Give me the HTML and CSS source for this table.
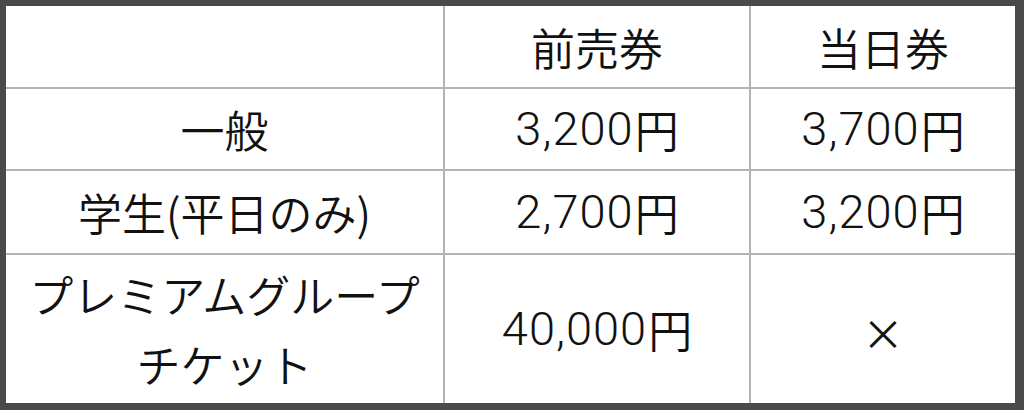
FILE: index.html
```html
<!DOCTYPE html>
<html lang="ja">
<head>
<meta charset="utf-8">
<link rel="stylesheet" href="styles.css">
</head>
<body>
<div class="frame">
  <div class="grid">
    <div class="cell"></div>
    <div class="cell">前売券</div>
    <div class="cell">当日券</div>
    <div class="cell">一般</div>
    <div class="cell"><span class="n">3,200</span>円</div>
    <div class="cell"><span class="n">3,700</span>円</div>
    <div class="cell">学生(平日のみ)</div>
    <div class="cell"><span class="n">2,700</span>円</div>
    <div class="cell"><span class="n">3,200</span>円</div>
    <div class="cell multi">プレミアムグループ<br>チケット</div>
    <div class="cell"><span class="n">40,000</span>円</div>
    <div class="cell"><span class="x">×</span></div>
  </div>
</div>
</body>
</html>
```

FILE: styles.css
```css
html, body {
  margin: 0;
  padding: 0;
  background: #4d4d4d;
}
.frame {
  width: 1024px;
  height: 410px;
  box-sizing: border-box;
  border-style: solid;
  border-color: #4a4a4a;
  border-width: 6px 9px 7px 6px;
  background: #b4b4b4;
}
.grid {
  display: grid;
  grid-template-columns: 437px 304px 264px;
  grid-template-rows: 81px 80px 82px 148px;
  gap: 2px;
  height: 100%;
  background: #b4b4b4;
}
.cell {
  background: #fff;
  display: flex;
  align-items: center;
  justify-content: center;
  text-align: center;
  font-family: "Noto Sans CJK JP", "Noto Sans", sans-serif;
  font-weight: 350;
  font-size: 44px;
  line-height: 70px;
  color: #111;
}
.n {
  font-family: "Roboto", "Liberation Sans", sans-serif;
  font-weight: 300;
  font-size: 47px;
  letter-spacing: 1px;
  margin-right: 1px;
}
.x {
  font-family: "Noto Sans CJK JP", sans-serif;
  font-size: 42px;
  font-weight: 400;
  padding-top: 6px;
}
```
